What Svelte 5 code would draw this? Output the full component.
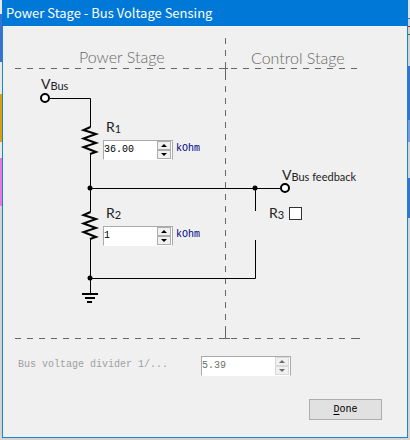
<script>
  let r1 = $state('36.00');
  let r2 = $state('1');
  let r3 = $state(false);
  let divider = $state('5.39');
</script>

{#snippet spinner(disabled, name)}
  <span class="arrows">
    <button type="button" {disabled} aria-label="Increase {name}">
      <svg width="6" height="3" viewBox="0 0 6 3" aria-hidden="true"><path d="M0 3 L3 0 L6 3 Z" /></svg>
    </button>
    <button type="button" {disabled} aria-label="Decrease {name}">
      <svg width="6" height="3" viewBox="0 0 6 3" aria-hidden="true"><path d="M0 0 L3 3 L6 0 Z" /></svg>
    </button>
  </span>
{/snippet}

<div class="desktop">
  <main class="window">
    <h1>Power Stage - Bus Voltage Sensing</h1>

    <section class="schematic" aria-label="Bus voltage divider">
      <svg width="350" height="308" viewBox="12 34 350 308" aria-hidden="true">
        <g class="guides">
          <path d="M15 68.5H360" stroke-dasharray="6 6" />
          <path d="M15 338.5H360" stroke-dasharray="6 6" />
          <path d="M225.5 38V338" stroke-dasharray="6 6" />
          <path d="M220 68.5H228M225.5 64V74M220 338.5H230M225.5 332V338M357 338.5H360" />
        </g>
        <g class="wires">
          <path d="M50 98.5H90.5V127M90.5 154V212M90.5 239V294M90 188.5H280M255.5 188V211M90 278.5H255.5V240" />
        </g>
        <g class="resistors">
          <path d="M90.500 127L83.500 130L96 134L83.500 138.500L96 143L83.500 147L96 152L90 154" />
          <path d="M90.500 212L83.500 215L96 219L83.500 223.500L96 228L83.500 232L96 237L90 239" />
        </g>
        <g class="ground">
          <path d="M82 294H98M85 298H95M87 302H92" />
        </g>
        <g class="joints">
          <circle cx="90" cy="188" r="2.500" />
          <circle cx="255" cy="188" r="2.500" />
          <circle cx="90" cy="278" r="2.500" />
        </g>
        <g class="ports">
          <circle cx="45" cy="98" r="4" />
          <circle cx="285" cy="188" r="4" />
        </g>
      </svg>

      <h2 style:left="67px" style:top="15px">Power Stage</h2>
      <h2 style:left="239px" style:top="16px">Control Stage</h2>
      <span class="tag" style:left="29px" style:top="41px">V<sub>Bus</sub></span>
      <span class="tag" style:left="270px" style:top="132px">V<sub>Bus feedback</sub></span>

      <label class="tag" for="r1" style:left="94px" style:top="84px">R<sub>1</sub></label>
      <div class="field" style:left="91px" style:top="106px">
        <span class="box"><input id="r1" type="text" bind:value={r1} />{@render spinner(false, 'R1')}</span>
        <span class="unit">kOhm</span>
      </div>

      <label class="tag" for="r2" style:left="94px" style:top="170px">R<sub>2</sub></label>
      <div class="field" style:left="91px" style:top="192px">
        <span class="box"><input id="r2" type="text" bind:value={r2} />{@render spinner(false, 'R2')}</span>
        <span class="unit">kOhm</span>
      </div>

      <label class="tag" for="r3" style:left="257px" style:top="170px">R<sub>3</sub></label>
      <input id="r3" class="check" type="checkbox" bind:checked={r3} style:left="277px" style:top="173px" />
    </section>

    <div class="result">
      <label for="divider">Bus voltage divider 1/...</label>
      <span class="box wide"><input id="divider" type="text" disabled bind:value={divider} />{@render spinner(true, 'divider')}</span>
    </div>

    <footer>
      <button class="done" type="button"><u>D</u>one</button>
    </footer>
  </main>
</div>

<style>
  :global(body) {
    margin: 0;
    background: #d4d4d4;
  }
  .desktop {
    padding: 0 2px 3px;
    background:
      linear-gradient(#e8e8e8 0 14px, #3b6fd0 14px 62px, #e8e8e8 62px 94px, #e0a000 94px 142px, #e8e8e8 142px 158px, #e878e0 158px 206px, #d4d4d4 206px) left / 2px 100% no-repeat,
      linear-gradient(#e0e0e0 0 18px, #1883d7 18px 19px, #d4d4d4 19px 26px, #d01030 26px 27px, #d4d4d4 27px 34px, #109020 34px 35px, #d4d4d4 35px 66px, #3b6fd0 66px 120px, #7a9ad8 120px 142px, #d4d4d4 142px 178px, #3b6fd0 178px 218px, #d4d4d4 218px) right / 2px 100% no-repeat;
  }
  .window {
    box-sizing: border-box;
    min-height: 437px;
    border: 1px solid #1883d7;
    border-top: 0;
    background: #f0f0f0;
    font-family: "Liberation Mono", monospace;
    font-size: 10px;
    line-height: 14px;
  }
  h1 {
    margin: 0 -1px;
    padding: 0 4px;
    background: #0078d7;
    color: #fff;
    font: 400 13px/26px "Noto Sans CJK SC", "Noto Sans", sans-serif;
  }
  .schematic {
    position: relative;
    margin: 8px 0 0 9px;
  }
  .schematic > svg {
    display: block;
  }
  .schematic path,
  .ports circle {
    fill: none;
    stroke: #000;
  }
  .schematic .guides path {
    stroke: #666;
  }
  .schematic .resistors path,
  .schematic .ground path,
  .ports circle {
    stroke-width: 2;
  }
  .ports circle {
    fill: #fff;
  }
  h2,
  .tag,
  .field,
  .check {
    position: absolute;
    margin: 0;
    white-space: nowrap;
  }
  h2 {
    color: #686868;
    font: 300 16px/16px Lato, sans-serif;
  }
  .tag {
    color: #222;
    font: 400 14px/18px Lato, sans-serif;
  }
  .tag sub {
    font-size: 11px;
    line-height: 1;
    vertical-align: -1px;
  }
  .field {
    display: flex;
    gap: 3px;
  }
  .box {
    box-sizing: border-box;
    display: flex;
    width: 70px;
    height: 20px;
    padding-right: 1px;
    border: 1px solid #aaa;
    border-bottom-color: #fff;
    background: #fff;
  }
  .box.wide {
    width: 90px;
  }
  .box input {
    flex: 1;
    min-width: 0;
    height: 16px;
    padding: 0;
    border: 0;
    background: none;
    color: #000;
    font: inherit;
  }
  .box input:disabled {
    color: #6d6d6d;
  }
  .arrows {
    display: flex;
    flex-direction: column;
    width: 14px;
    background: #f0f0f0;
  }
  .schematic .arrows path,
  .arrows path {
    fill: #000;
    stroke: none;
  }
  .arrows button {
    display: flex;
    align-items: center;
    justify-content: center;
    box-sizing: border-box;
    height: 9px;
    padding: 0;
    border: 1px solid #adadad;
    background: #f0f0f0;
  }
  .arrows button:disabled {
    border-color: #d9d9d9;
  }
  .arrows button:disabled path {
    fill: #6d6d6d;
  }
  .unit {
    color: #000080;
    line-height: 18px;
  }
  .check {
    appearance: none;
    box-sizing: border-box;
    width: 13px;
    height: 13px;
    border: 1px solid #333;
    background: #fff;
  }
  .check:checked {
    box-shadow: inset 0 0 0 2px #fff;
    background: #333;
  }
  .result {
    display: flex;
    justify-content: space-between;
    width: 273px;
    margin: 14px 0 0 15px;
    color: #a0a0a0;
  }
  .result label {
    line-height: 18px;
  }
  footer {
    display: flex;
    justify-content: flex-end;
    padding: 23px 25px 17px;
  }
  .done {
    width: 73px;
    height: 21px;
    padding: 0;
    border: 1px solid #adadad;
    background: #e1e1e1;
    color: #000;
    font: inherit;
  }
  .done u {
    text-underline-offset: 2px;
  }
</style>
